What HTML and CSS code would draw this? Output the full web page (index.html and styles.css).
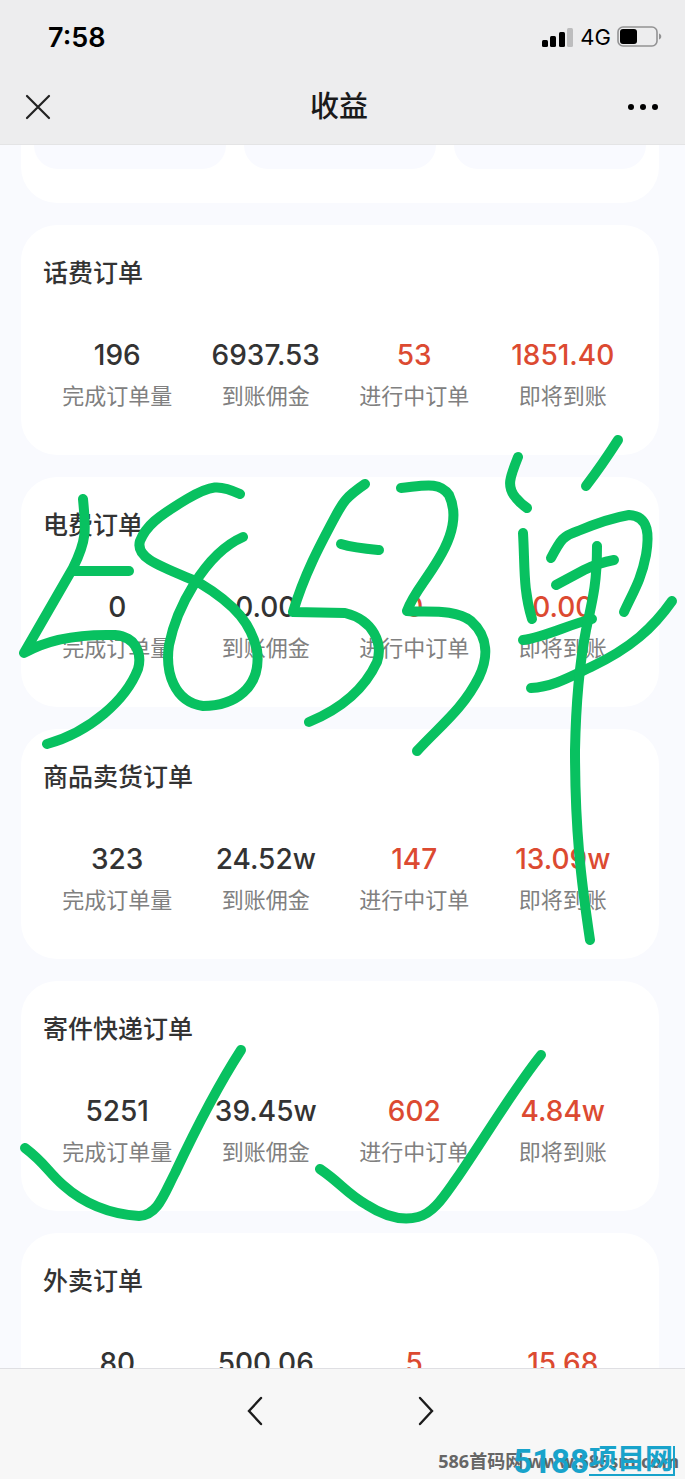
FILE: index.html
```html
<!DOCTYPE html>
<html lang="zh-CN">
<head>
    <meta charset="UTF-8">
    <meta name="viewport" content="width=device-width, initial-scale=1.0">
    <title>收益</title>
    <link rel="stylesheet" href="styles.css">
</head>
<body>

    <header class="top">
        <div class="status-bar">
            <span class="time">7:58</span>
            <div class="status-icons">
                <svg width="32" height="20" viewBox="0 0 32 20" aria-hidden="true">
                    <rect x="0" y="13" width="6" height="7" rx="1.5"/>
                    <rect x="8" y="9" width="6" height="11" rx="1.5"/>
                    <rect x="17" y="5" width="6" height="15" rx="1.5"/>
                    <rect x="25" y="1" width="6" height="19" rx="1.5" fill="#bdbdbe"/>
                </svg>
                <span class="network">4G</span>
                <svg width="46" height="22" viewBox="0 0 46 22" aria-hidden="true">
                    <rect x="1" y="1" width="39" height="19" rx="5" fill="none" stroke="#929293" stroke-width="1.6"/>
                    <rect x="3" y="3" width="17" height="15" rx="3"/>
                    <path d="M42 7.5c3 1 3 5 0 6z" fill="#929293"/>
                </svg>
            </div>
        </div>
        <nav class="title-bar">
            <button class="icon-btn" aria-label="关闭">
                <svg width="26" height="26" viewBox="0 0 26 26" aria-hidden="true">
                    <path d="M2 2L24 24M24 2L2 24" fill="none" stroke="#222" stroke-width="2.2" stroke-linecap="round"/>
                </svg>
            </button>
            <h1>收益</h1>
            <button class="icon-btn" aria-label="更多">
                <svg width="32" height="26" viewBox="0 0 32 26" aria-hidden="true">
                    <circle cx="4" cy="13" r="3"/>
                    <circle cx="16" cy="13" r="3"/>
                    <circle cx="28" cy="13" r="3"/>
                </svg>
            </button>
        </nav>
    </header>

    <main class="content">
        <section class="card tiles">
            <div class="tile"></div>
            <div class="tile"></div>
            <div class="tile"></div>
        </section>

        <section class="card">
            <h2>话费订单</h2>
            <dl class="stats">
                <div class="stat"><dt>完成订单量</dt><dd>196</dd></div>
                <div class="stat"><dt>到账佣金</dt><dd>6937.53</dd></div>
                <div class="stat pending"><dt>进行中订单</dt><dd>53</dd></div>
                <div class="stat pending"><dt>即将到账</dt><dd>1851.40</dd></div>
            </dl>
        </section>

        <section class="card">
            <h2>电费订单</h2>
            <dl class="stats">
                <div class="stat"><dt>完成订单量</dt><dd>0</dd></div>
                <div class="stat"><dt>到账佣金</dt><dd>0.00</dd></div>
                <div class="stat pending"><dt>进行中订单</dt><dd>0</dd></div>
                <div class="stat pending"><dt>即将到账</dt><dd>0.00</dd></div>
            </dl>
        </section>

        <section class="card">
            <h2>商品卖货订单</h2>
            <dl class="stats">
                <div class="stat"><dt>完成订单量</dt><dd>323</dd></div>
                <div class="stat"><dt>到账佣金</dt><dd>24.52w</dd></div>
                <div class="stat pending"><dt>进行中订单</dt><dd>147</dd></div>
                <div class="stat pending"><dt>即将到账</dt><dd>13.09w</dd></div>
            </dl>
        </section>

        <section class="card">
            <h2>寄件快递订单</h2>
            <dl class="stats">
                <div class="stat"><dt>完成订单量</dt><dd>5251</dd></div>
                <div class="stat"><dt>到账佣金</dt><dd>39.45w</dd></div>
                <div class="stat pending"><dt>进行中订单</dt><dd>602</dd></div>
                <div class="stat pending"><dt>即将到账</dt><dd>4.84w</dd></div>
            </dl>
        </section>

        <section class="card">
            <h2>外卖订单</h2>
            <dl class="stats">
                <div class="stat"><dt>完成订单量</dt><dd>80</dd></div>
                <div class="stat"><dt>到账佣金</dt><dd>500.06</dd></div>
                <div class="stat pending"><dt>进行中订单</dt><dd>5</dd></div>
                <div class="stat pending"><dt>即将到账</dt><dd>15.68</dd></div>
            </dl>
        </section>
    </main>

    <footer class="bottom-bar">
        <button class="icon-btn" aria-label="后退">
            <svg width="18" height="30" viewBox="0 0 18 30" aria-hidden="true">
                <path d="M15 2L3 15L15 28" fill="none" stroke="#1c1c1c" stroke-width="2.4" stroke-linecap="round"/>
            </svg>
        </button>
        <button class="icon-btn" aria-label="前进">
            <svg width="18" height="30" viewBox="0 0 18 30" aria-hidden="true">
                <path d="M3 2L15 15L3 28" fill="none" stroke="#1c1c1c" stroke-width="2.4" stroke-linecap="round"/>
            </svg>
        </button>
    </footer>

    <!-- 手写标记 -->
    <svg class="marker" width="685" height="1479" viewBox="0 0 685 1479" aria-hidden="true">
        <path d="M83 499C86 530 87 540 73 568L24 653C50 638 80 634 115 635C137 637 142 655 138 669C126 700 90 732 47 744"/>
        <path d="M74 571H129"/>
        <path d="M240 494C219 484 211 485 187 499C157 517 146 526 140 541C135 558 160 566 198 582C238 606 251 625 257 650C262 688 234 706 203 706C174 702 165 672 169 645C176 610 204 554 243 537"/>
        <path d="M365 484C346 497 343 502 335 517C320 545 304 575 293 612L345 613C374 620 383 644 377 662C365 688 343 708 309 722"/>
        <path d="M341 544C354 548 367 549 379 550"/>
        <path d="M401 488C423 486 439 481 449 495C459 516 451 539 438 560C425 582 413 594 407 611C425 613 454 608 471 621C489 637 488 658 479 677C463 709 440 726 417 751"/>
        <path d="M518 457C510 477 506 487 516 498Q521 504 527 508"/>
        <path d="M618 440Q602 465 586 486"/>
        <path d="M523 533C525 567 523 590 532 619"/>
        <path d="M551 558C561 539 563 536 578 531C602 521 617 517 629 515C650 516 649 537 646 555C641 581 633 592 624 612"/>
        <path d="M556 585L584 570Q598 563 614 560"/>
        <path d="M523 640C546 637 567 625 592 619"/>
        <path d="M531 688C552 687 568 678 591 667C631 648 653 628 672 601"/>
        <path d="M597 546C597 580 594 594 586 630C579 666 576 700 575 750C575 830 581 880 590 940"/>
        <path d="M25 1148C45 1163 48 1172 63 1185C82 1202 108 1214 139 1216C158 1215 164 1194 175 1173C199 1122 219 1084 241 1050"/>
        <path d="M320 1169C342 1184 346 1193 367 1205C384 1216 402 1221 418 1217C434 1213 444 1196 457 1178C484 1139 513 1090 541 1055"/>
    </svg>

    <div class="watermark">
        <span class="site">586首码网 www.586sm.com</span>
        <span class="logo">5188<span class="logo-cn">项目网</span></span>
    </div>

</body>
</html>
```
FILE: styles.css
```css
* {
    margin: 0;
    padding: 0;
    box-sizing: border-box;
}

body {
    position: relative;
    display: flex;
    flex-direction: column;
    height: 100vh;
    overflow: hidden;
    background-color: #f9fafe;
    color: #333;
    font-family: Inter, "Noto Sans CJK SC", sans-serif;
}

.top {
    flex: none;
    padding-top: 20px;
    background-color: #ededee;
    border-bottom: 1px solid #e4e4e5;
}

.status-bar {
    display: flex;
    justify-content: space-between;
    align-items: center;
    height: 34px;
    padding: 0 22px 0 48px;
    color: #000;
}

.time {
    font-size: 27px;
    font-weight: 600;
}

.status-icons {
    display: flex;
    align-items: center;
    gap: 6px;
}

.network {
    font-size: 22px;
    line-height: 22px;
}

.title-bar {
    display: flex;
    justify-content: space-between;
    align-items: center;
    height: 90px;
    padding: 16px 26px 0 25px;
}

h1 {
    color: #1a1a1a;
    font-size: 29px;
    font-weight: 500;
    line-height: 40px;
}

.icon-btn {
    display: flex;
    border: none;
    background: none;
    cursor: pointer;
}

.content {
    flex: 1;
    min-height: 0;
    overflow: hidden;
    padding: 0 26px 0 21px;
}

.card {
    margin-bottom: 22px;
    padding: 26px 22px 38px;
    border-radius: 36px;
    background-color: #fff;
}

.tiles {
    display: grid;
    grid-template-columns: repeat(3, 1fr);
    gap: 18px;
    padding: 0 13px 34px;
    border-radius: 0 0 36px 36px;
}

.tile {
    height: 24px;
    border-radius: 0 0 24px 24px;
    background-color: #f9faff;
}

h2 {
    font-size: 25px;
    font-weight: 500;
    line-height: 44px;
}

.stats {
    display: grid;
    grid-template-columns: repeat(4, 1fr);
    margin-top: 40px;
    text-align: center;
}

.stat {
    display: flex;
    flex-direction: column-reverse;
}

dd {
    font-size: 28px;
    font-weight: 500;
    line-height: 40px;
}

dt {
    color: #808080;
    font-size: 22px;
    line-height: 42px;
}

.pending dd {
    color: #dc4a31;
}

.bottom-bar {
    flex: none;
    display: flex;
    justify-content: center;
    gap: 153px;
    height: 111px;
    padding: 27px 5px 0 0;
    background-color: #f7f7f7;
    border-top: 1px solid #dfdfe3;
}

.marker {
    position: absolute;
    top: 0;
    left: 0;
    pointer-events: none;
}

.marker path {
    fill: none;
    stroke: #08c160;
    stroke-width: 10;
    stroke-linecap: round;
    stroke-linejoin: round;
}

.watermark {
    position: absolute;
    right: 6px;
    bottom: 0;
    white-space: nowrap;
}

.site {
    display: block;
    color: #666;
    font-family: "Noto Sans", "Noto Sans CJK SC", sans-serif;
    font-size: 18px;
    font-weight: 700;
    line-height: 36px;
}

.logo {
    position: absolute;
    right: 4px;
    bottom: 3px;
    display: flex;
    align-items: flex-end;
    color: #18a3cb;
    font-family: Roboto, "Noto Sans CJK SC", sans-serif;
    font-size: 33px;
    font-weight: 700;
    line-height: 28px;
}

.logo-cn {
    border-right: 2px solid #18a3cb;
    border-bottom: 2px solid #18a3cb;
    font-size: 28px;
    line-height: 28px;
}
```
